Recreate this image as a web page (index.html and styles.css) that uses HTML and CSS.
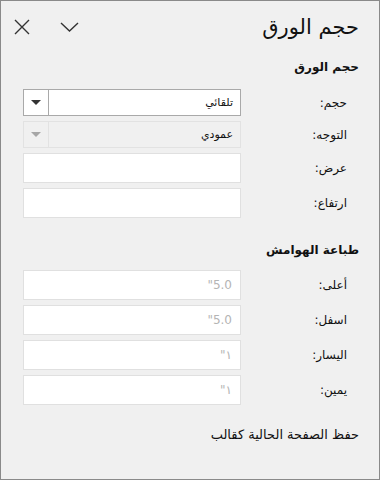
FILE: index.html
```html
<!DOCTYPE html>
<html lang="ar" dir="rtl">
<head>
    <meta charset="UTF-8">
    <meta name="viewport" content="width=device-width, initial-scale=1.0">
    <title>حجم الورق</title>
    <link rel="stylesheet" href="styles.css">
</head>
<body>
    <div class="pane">
        <div class="pane-header">
            <h1 class="pane-title">حجم الورق</h1>
            <div class="pane-actions">
                <button class="icon-btn" title="خيارات">
                    <svg width="19" height="10" viewBox="0 0 19 10"><path d="M1 1 L9.5 9 L18 1" fill="none" stroke="#333" stroke-width="1.4"/></svg>
                </button>
                <button class="icon-btn" title="إغلاق">
                    <svg width="16" height="16" viewBox="0 0 16 16"><path d="M1 1 L15 15 M15 1 L1 15" fill="none" stroke="#333" stroke-width="1.4"/></svg>
                </button>
            </div>
        </div>

        <h2 class="section-title">حجم الورق</h2>

        <div class="form-row">
            <label>حجم:</label>
            <div class="select">
                <span class="select-value">تلقائي</span>
                <span class="select-arrow"></span>
            </div>
        </div>
        <div class="form-row">
            <label>التوجه:</label>
            <div class="select disabled">
                <span class="select-value">عمودي</span>
                <span class="select-arrow"></span>
            </div>
        </div>
        <div class="form-row tall">
            <label>عرض:</label>
            <input type="text">
        </div>
        <div class="form-row tall">
            <label>ارتفاع:</label>
            <input type="text">
        </div>

        <h2 class="section-title margins">طباعة الهوامش</h2>

        <div class="form-row tall">
            <label>أعلى:</label>
            <input type="text" placeholder='5.0"'>
        </div>
        <div class="form-row tall">
            <label>اسفل:</label>
            <input type="text" placeholder='5.0"'>
        </div>
        <div class="form-row tall">
            <label>اليسار:</label>
            <input type="text" placeholder='١"'>
        </div>
        <div class="form-row tall">
            <label>يمين:</label>
            <input type="text" placeholder='١"'>
        </div>

        <a class="save-link">حفظ الصفحة الحالية كقالب</a>
    </div>
</body>
</html>
```

FILE: styles.css
```css
* {
    margin: 0;
    padding: 0;
    box-sizing: border-box;
    font-family: "DejaVu Sans", sans-serif;
}

body {
    background-color: #f0f0f0;
}

.pane {
    width: 380px;
    height: 480px;
    border: 1px solid #8a8a8a;
    background-color: #f0f0f0;
    padding: 0 20px 0 22px;
    color: #111;
}

.pane-header {
    display: flex;
    justify-content: space-between;
    align-items: center;
    height: 56px;
    padding-bottom: 5px;
    margin-left: -9px;
}

.pane-title {
    font-size: 21px;
    font-weight: normal;
    line-height: 28px;
}

.pane-actions {
    display: flex;
    align-items: center;
    gap: 30px;
}

.icon-btn {
    background: none;
    border: none;
    display: flex;
    align-items: center;
    justify-content: center;
}

.section-title {
    font-size: 12px;
    font-weight: bold;
    line-height: 20px;
    margin-bottom: 12px;
}

.section-title.margins {
    margin-top: 22px;
    margin-bottom: 10px;
}

.form-row {
    display: flex;
    align-items: center;
    margin-bottom: 5px;
}

.form-row label {
    flex: 1;
    font-size: 12px;
    padding-right: 12px;
}

.select {
    width: 218px;
    height: 27px;
    display: flex;
    align-items: center;
    background-color: white;
    border: 1px solid #a9a9a9;
}

.select-value {
    flex: 1;
    font-size: 11px;
    padding-right: 7px;
}

.select-arrow {
    width: 25px;
    height: 100%;
    border-right: 1px solid #a9a9a9;
    display: flex;
    align-items: center;
    justify-content: center;
}

.select-arrow::after {
    content: "";
    border-left: 5px solid transparent;
    border-right: 5px solid transparent;
    border-top: 5px solid #333;
}

.select.disabled {
    background-color: #f0f0f0;
    border-color: #e2e2e2;
}

.select.disabled .select-arrow {
    border-right-color: #e2e2e2;
}

.select.disabled .select-arrow::after {
    border-top-color: #a6a6a6;
}

input {
    width: 218px;
    height: 30px;
    border: 1px solid #e0e0e0;
    background-color: white;
    font-size: 12px;
    padding: 0 8px;
    outline: none;
}

input::placeholder {
    color: #b4b4b4;
}

.save-link {
    display: block;
    font-size: 13px;
    line-height: 20px;
    margin-top: 20px;
}
```
